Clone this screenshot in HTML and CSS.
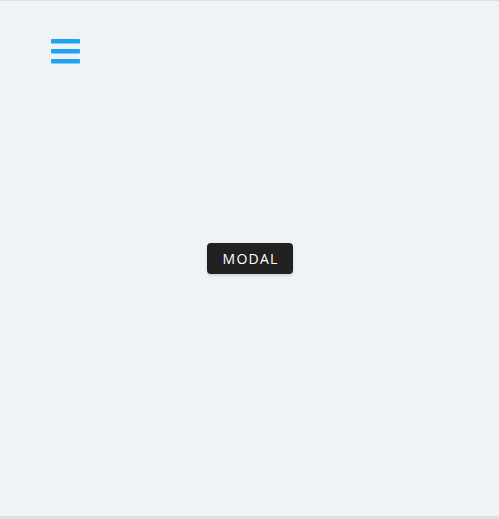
FILE: index.html
```html
<!DOCTYPE html>
<html>
<head>
<meta charset="utf-8">
<link rel="stylesheet" href="styles.css">
</head>
<body>
<div class="app">
  <header class="topbar">
    <button class="menu" aria-label="Menu">
      <svg width="29" height="26" viewBox="0 0 29 26">
        <rect x="0" y="0" width="29" height="4.4" rx="1" fill="#1fa2ef"/>
        <rect x="0" y="10" width="29" height="4.4" rx="1" fill="#1fa2ef"/>
        <rect x="0" y="20" width="29" height="4.4" rx="1" fill="#1fa2ef"/>
      </svg>
    </button>
  </header>
  <main class="content">
    <button class="modal-btn">Modal</button>
  </main>
</div>
</body>
</html>
```
FILE: styles.css
```css
html, body {
  margin: 0;
  padding: 0;
  height: 100%;
}
body {
  background: #eff3f6;
  font-family: Roboto, "Liberation Sans", sans-serif;
}
.app {
  box-sizing: border-box;
  height: 519px;
  border-top: 1px solid #dcdfe5;
  border-bottom: 3px solid #dcdfe5;
  display: flex;
  flex-direction: column;
}
.topbar {
  padding: 38px 0 0 51px;
  height: 26px;
}
.menu {
  border: 0;
  background: none;
  padding: 0;
  display: block;
  line-height: 0;
}
.content {
  flex: 1;
  display: flex;
  justify-content: center;
  padding-top: 178px;
  padding-left: 1px;
  align-items: flex-start;
}
.modal-btn {
  background: #212121;
  color: #fff;
  border: 0;
  border-radius: 4px;
  height: 31px;
  width: 86px;
  font-family: "Open Sans", "Liberation Sans", sans-serif;
  font-size: 14px;
  font-weight: 400;
  letter-spacing: 1.25px;
  text-indent: 1.25px;
  text-transform: uppercase;
  box-shadow: 0 2px 2px rgba(0,0,0,0.08), 0 1px 4px rgba(0,0,0,0.06);
  padding: 0;
}
```
